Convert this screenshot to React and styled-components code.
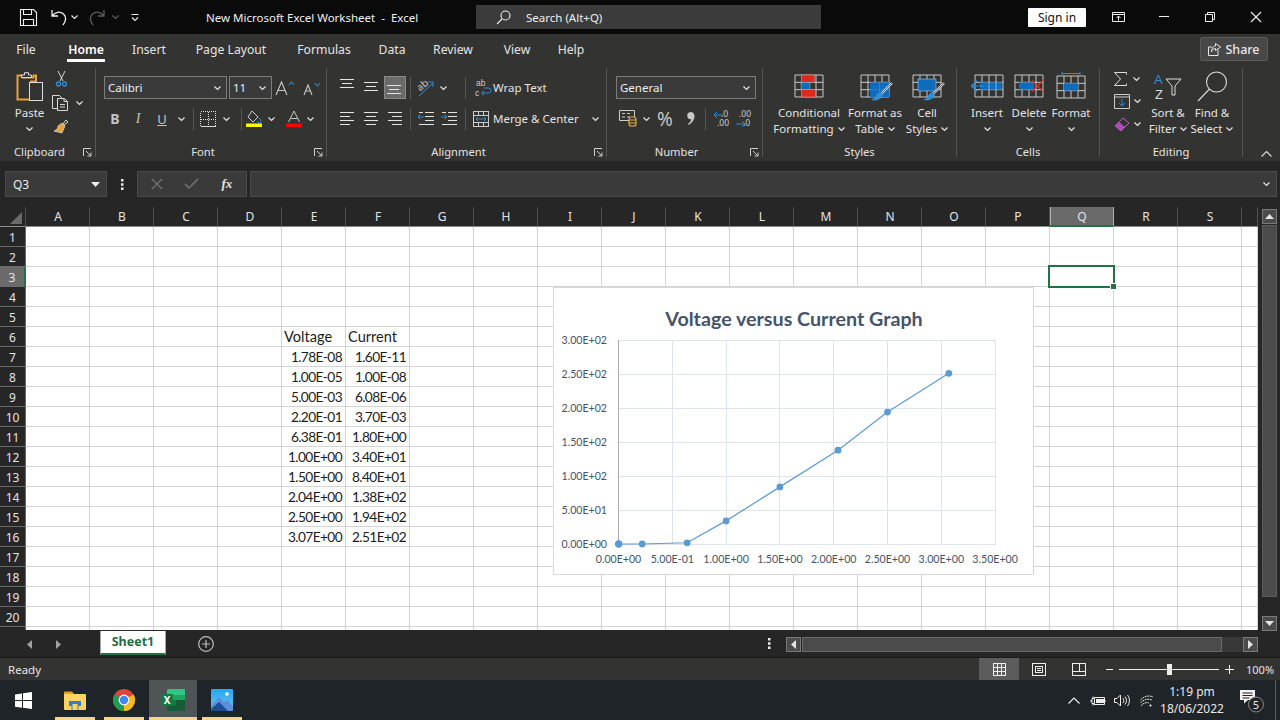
import React from "react";
import styled, { createGlobalStyle } from "styled-components";

const GlobalStyle = createGlobalStyle`
  html, body { margin: 0; padding: 0; background: #262626; }
  body { font-family: "Noto Sans", "Open Sans", sans-serif; font-size: 12px; color: #e8e8e8; }
  * { box-sizing: border-box; }
`;

const CALIBRI = `Lato, "Open Sans", sans-serif`;
const INK = "#e4e4e4";
const BLUE = "#2f8fd6";
const FILL = "#0f6cbd";
const GRID = "#c8c8c8";

const Page = styled.div`
  width: 1280px;
  height: 720px;
  display: flex;
  flex-direction: column;
  overflow: hidden;
`;

/* ---------- title bar ---------- */
const TitleBar = styled.div`
  height: 34px;
  flex: none;
  background: #0a0a0a;
  display: flex;
  align-items: center;
`;
const QuickBar = styled.div`
  width: 206px;
  display: flex;
  align-items: center;
  padding-left: 20px;
`;
const Title = styled.div`
  width: 270px;
  white-space: pre;
  font-size: 11.5px;
  color: #f0f0f0;
`;
const Search = styled.div`
  width: 345px;
  height: 24px;
  background: #3b3b3b;
  display: flex;
  align-items: center;
  gap: 15px;
  padding-left: 20px;
  font-size: 11.5px;
  color: #eee;
`;
const SignIn = styled.div`
  width: 58px;
  height: 19px;
  margin-left: 207px;
  background: #fff;
  color: #111;
  border-radius: 1px;
  text-align: center;
  line-height: 19px;
  font-size: 12px;
`;
const WinButton = styled.div`
  width: 46px;
  display: flex;
  justify-content: center;
  margin-left: ${p => p.$ml || 0}px;
`;

/* ---------- menu ---------- */
const MenuBar = styled.div`
  height: 30px;
  flex: none;
  background: #333332;
  display: flex;
`;
const MenuTab = styled.div`
  width: ${p => p.$w}px;
  display: flex;
  justify-content: center;
  padding-top: 7px;
  font-size: 12.2px;
  color: ${INK};
`;
const MenuLabel = styled.span`
  line-height: 17px;
  height: 21px;
  padding: 0 1px 1px;
  font-weight: ${p => (p.$on ? 600 : 400)};
  color: ${p => (p.$on ? "#fff" : INK)};
  border-bottom: 3px solid ${p => (p.$on ? "#fff" : "transparent")};
`;
const ShareButton = styled.div`
  margin: 3px 12px 0 auto;
  width: 68px;
  height: 24px;
  border: 1px solid #5a5a5a;
  border-radius: 2px;
  background: #484848;
  display: flex;
  align-items: center;
  justify-content: center;
  gap: 4px;
  font-size: 12.5px;
  font-weight: 500;
`;

/* ---------- ribbon ---------- */
const Ribbon = styled.div`
  height: 97px;
  flex: none;
  background: #333332;
  padding-top: 4px;
  display: flex;
  position: relative;
`;
const Group = styled.div`
  width: ${p => p.$w}px;
  height: 89px;
  flex: none;
  display: flex;
  flex-direction: column;
  border-right: 1px solid #555;
`;
const GroupBody = styled.div`
  flex: 1;
  display: flex;
  flex-direction: ${p => (p.$stack ? "column" : "row")};
  gap: ${p => (p.$stack ? 8 : 0)}px;
  padding-top: ${p => (p.$stack ? 8 : 4)}px;
  padding-left: ${p => p.$pl || 0}px;
`;
const GroupFoot = styled.div`
  height: 10px;
  line-height: 10px;
  display: grid;
  grid-template-columns: 1fr ${p => (p.$launcher ? "16px" : "")};
  text-align: center;
  font-size: 11.2px;
  color: ${INK};
  align-items: center;
`;
const LauncherSlot = styled.div`
  justify-self: end;
  margin-right: 3px;
`;
const ToolRow = styled.div`
  height: 23px;
  display: flex;
  align-items: center;
`;
const Tool = styled.div`
  width: ${p => p.$w || 22}px;
  height: ${p => p.$h || 23}px;
  flex: none;
  display: flex;
  align-items: center;
  justify-content: ${p => (p.$start ? "flex-start" : "center")};
  gap: ${p => p.$gap || 0}px;
  margin-left: ${p => p.$ml || 0}px;
  background: ${p => (p.$on ? "#6b6b6b" : "transparent")};
  border: ${p => (p.$on ? "1px solid #8a8a8a" : "none")};
  font-size: 11.5px;
  white-space: nowrap;
  color: ${INK};
`;
const ToolSep = styled.div`
  width: 1px;
  height: 22px;
  flex: none;
  background: #555;
  margin-left: ${p => p.$ml || 0}px;
`;
const Combo = styled.div`
  width: ${p => p.$w}px;
  height: 23px;
  flex: none;
  margin-left: ${p => p.$ml || 0}px;
  border: 1px solid #7c7c7c;
  background: #3a3a3a;
  display: flex;
  align-items: center;
  justify-content: space-between;
  padding: 0 5px 0 3px;
  font-size: 11.5px;
  color: #eee;
`;
const Letter = styled.span`
  font-family: ${p => p.$serif ? `"Liberation Serif", serif` : `"Noto Sans", sans-serif`};
  font-weight: ${p => (p.$bold ? 700 : 400)};
  font-style: ${p => (p.$italic ? "italic" : "normal")};
  text-decoration: ${p => (p.$under ? "underline" : "none")};
  font-size: ${p => p.$size || 13}px;
  color: ${p => p.$color || "#c4c4c4"};
`;
const PasteColumn = styled.div`
  width: 43px;
  margin-left: 8px;
  display: flex;
  flex-direction: column;
  align-items: center;
`;
const PasteLabel = styled.div`
  height: 16px;
  line-height: 16px;
  margin-top: 3px;
  font-size: 11.5px;
  color: ${INK};
`;
const SmallColumn = styled.div`
  width: ${p => p.$w}px;
  flex: none;
  display: flex;
  flex-direction: column;
  gap: ${p => p.$gap || 0}px;
  margin-top: ${p => p.$mt || 0}px;
`;
const BigButton = styled.div`
  width: ${p => p.$w}px;
  flex: none;
  display: flex;
  flex-direction: column;
  align-items: center;
  font-size: 11.5px;
  line-height: 16px;
  color: ${INK};
  white-space: nowrap;
`;
const IconBox = styled.div`
  height: 30px;
  margin-bottom: 3px;
`;
const TextLine = styled.div`
  height: 16px;
  display: flex;
  align-items: center;
  gap: 4px;
`;
const Collapse = styled.div`
  position: absolute;
  right: 8px;
  bottom: 4px;
`;
const MergeChev = styled.span`
  margin-left: 9px;
`;

/* ---------- formula bar ---------- */
const FormulaBar = styled.div`
  height: 46px;
  flex: none;
  background: #262626;
  padding: 10px 3px 10px 5px;
  display: flex;
`;
const FieldBox = styled.div`
  height: 26px;
  background: #3a3a3a;
  border: 1px solid #4a4a4a;
  display: flex;
  align-items: center;
`;
const NameBox = styled(FieldBox)`
  width: 102px;
  justify-content: space-between;
  padding: 0 6px 0 7px;
  font-size: 12px;
  color: #eee;
`;
const Dots = styled.div`
  width: 30px;
  display: flex;
  justify-content: center;
  align-items: center;
`;
const FxGroup = styled(FieldBox)`
  width: 110px;
  justify-content: space-around;
  padding: 0 2px;
`;
const FormulaInput = styled(FieldBox)`
  flex: 1;
  margin-left: 3px;
  justify-content: flex-end;
  padding-right: 6px;
`;

/* ---------- sheet ---------- */
const SheetArea = styled.div`
  height: 424px;
  flex: none;
  display: flex;
  background: #262626;
`;
const GridWrap = styled.div`
  width: 1258px;
  height: 423px;
  overflow: hidden;
  position: relative;
  flex: none;
`;
const Row = styled.div`
  height: 20px;
  display: flex;
`;
const Corner = styled.div`
  width: 26px;
  flex: none;
  background: #262626;
  border-bottom: 1px solid #8a8a8a;
  border-right: 1px solid #4e4e4e;
  display: flex;
  align-items: flex-end;
  justify-content: flex-end;
  padding: 0 3px 2px 0;
`;
const ColHead = styled.div`
  width: ${p => p.$w || 64}px;
  flex: none;
  background: ${p => (p.$on ? "#6a6a6a" : "#262626")};
  border-bottom: ${p => (p.$on ? "2px solid #217346" : "1px solid #8a8a8a")};
  border-right: 1px solid ${p => (p.$on ? "#b0b0b0" : "#505050")};
  box-shadow: ${p => (p.$on ? "inset 1px 0 0 #b0b0b0" : "none")};
  text-align: center;
  line-height: 20px;
  padding-left: 1px;
  font-size: 12px;
  color: #e4e4e4;
`;
const RowHead = styled.div`
  width: 26px;
  flex: none;
  background: ${p => (p.$on ? "#6a6a6a" : "#262626")};
  border-bottom: 1px solid #6a6a6a;
  border-right: ${p => (p.$on ? "2px solid #217346" : "1px solid #6a6a6a")};
  text-align: center;
  line-height: 21px;
  font-size: 12px;
  color: #e4e4e4;
`;
const Cell = styled.div`
  width: ${p => p.$w || 64}px;
  flex: none;
  background: #fff;
  border-right: 1px solid #d4d4d4;
  border-bottom: 1px solid #d4d4d4;
  font-family: ${CALIBRI};
  font-size: ${p => (p.$num ? 13.7 : 14.6)}px;
  letter-spacing: ${p => (p.$num ? -0.6 : 0)}px;
  line-height: 20px;
  color: #1c1c1c;
  text-align: ${p => (p.$num ? "right" : "left")};
  padding: ${p => (p.$num ? "0 3px 0 0" : "0 0 0 2px")};
  white-space: nowrap;
`;
const Selection = styled.div`
  position: absolute;
  left: 1048px;
  top: 58px;
  width: 67px;
  height: 23px;
  border: 2px solid #217346;
  &::after {
    content: "";
    position: absolute;
    right: -3px;
    bottom: -3px;
    width: 5px;
    height: 5px;
    background: #217346;
    outline: 1px solid #fff;
  }
`;
const ChartFrame = styled.div`
  position: absolute;
  left: 553px;
  top: 80px;
  width: 481px;
  height: 288px;
  background: #fff;
  border: 1px solid #d9d9d9;
`;
const VScroll = styled.div`
  flex: 1;
  display: flex;
  flex-direction: column;
  padding: 2px 3px 0 4px;
`;
const ScrollButton = styled.div`
  width: ${p => p.$w || 15}px;
  height: 15px;
  flex: none;
  background: #4b4b4b;
  border: 1px solid #7a7a7a;
  display: flex;
  align-items: center;
  justify-content: center;
`;
const VThumb = styled.div`
  height: 372px;
  margin-top: 1px;
  flex: none;
  background: #4b4b4b;
  border: 1px solid #5c5c5c;
`;
const VTrack = styled.div`
  flex: 1;
`;

/* ---------- tabs ---------- */
const TabBar = styled.div`
  height: 27px;
  flex: none;
  background: #262626;
  display: flex;
  align-items: flex-start;
  border-bottom: 1px solid #1a1a1a;
`;
const TabNav = styled.div`
  width: 100px;
  height: 26px;
  display: flex;
  align-items: center;
  gap: 24px;
  padding-left: 27px;
`;
const SheetTab = styled.div`
  width: 66px;
  height: 24px;
  background: #fff;
  border: 1px solid #a8a8a8;
  border-top: none;
  border-bottom: 2px solid #217346;
  text-align: center;
  line-height: 22px;
  font-size: 12.5px;
  font-weight: 700;
  color: #1f6e46;
`;
const AddSheet = styled.div`
  width: 16px;
  height: 16px;
  margin: 5px 0 0 32px;
`;
const TabDots = styled.div`
  margin: 7px 0 0 547px;
  width: 16px;
  display: flex;
  justify-content: center;
`;
const HScroll = styled.div`
  display: flex;
  margin: 6px 0 0 9px;
  width: 472px;
`;
const HThumb = styled.div`
  width: 420px;
  height: 15px;
  flex: none;
  margin-left: 1px;
  background: #4b4b4b;
  border: 1px solid #6a6a6a;
`;
const HTrack = styled.div`
  flex: 1;
  background: #383838;
  height: 15px;
`;

/* ---------- status bar ---------- */
const StatusBar = styled.div`
  height: 22px;
  flex: none;
  background: #333332;
  display: flex;
  align-items: center;
  padding-left: 8px;
  font-size: 11.5px;
  color: #e4e4e4;
`;
const ViewBtn = styled.div`
  width: 40px;
  height: 22px;
  flex: none;
  display: flex;
  align-items: center;
  justify-content: center;
  background: ${p => (p.$on ? "#5c5c5c" : "transparent")};
  margin-left: ${p => p.$ml || 0}px;
`;
const ZoomBar = styled.div`
  display: flex;
  align-items: center;
  margin-left: 7px;
  gap: 3px;
`;
const Slider = styled.div`
  width: 100px;
  height: 1px;
  margin: 0 3px;
  background: #eee;
  display: flex;
  justify-content: center;
  align-items: center;
`;
const SliderKnob = styled.div`
  width: 5px;
  height: 11px;
  flex: none;
  background: #eee;
`;
const ZoomText = styled.div`
  margin-left: 12px;
  font-size: 11px;
`;

/* ---------- taskbar ---------- */
const Taskbar = styled.div`
  height: 40px;
  flex: none;
  background: #1e2427;
  display: flex;
  align-items: stretch;
`;
const StartBtn = styled.div`
  width: 51px;
  padding-right: 4px;
  display: flex;
  align-items: center;
  justify-content: center;
`;
const TaskItem = styled.div`
  width: 48px;
  margin-right: 1px;
  display: flex;
  align-items: center;
  justify-content: center;
  background-color: ${p => (p.$on ? "#4f5557" : "transparent")};
  background-image: linear-gradient(#f6d586, #f6d586);
  background-repeat: no-repeat;
  background-position: center bottom;
  background-size: ${p => (p.$on ? "100%" : "40px")} 3px;
`;
const Tray = styled.div`
  margin-left: auto;
  display: flex;
  align-items: center;
`;
const TrayIcon = styled.div`
  width: ${p => p.$w || 24}px;
  display: flex;
  justify-content: center;
`;
const Clock = styled.div`
  width: 66px;
  margin-left: 1px;
  text-align: center;
  font-size: 12px;
  line-height: 17px;
  color: #e8e8e8;
`;
const Notify = styled.div`
  width: 50px;
  padding-left: 6px;
  height: 40px;
  display: flex;
  align-items: center;
  justify-content: center;
`;
const ShowDesktop = styled.div`
  width: 5px;
  height: 40px;
  border-left: 1px solid #5a5f62;
`;

/* ---------- icons ---------- */
const Icon = ({ w, h, vb, children, color = INK, sw = 1, flip, ...rest }) => (
  <svg
    width={w}
    height={h}
    viewBox={vb || `0 0 ${w} ${h}`}
    fill="none"
    stroke={color}
    strokeWidth={sw}
    style={{ display: "block", flex: "none", overflow: "visible", transform: flip ? "scaleX(-1)" : "none" }}
    {...rest}
  >
    {children}
  </svg>
);

const Chev = ({ color = INK }) => (
  <Icon w={7} h={4} color={color} sw={1.2}>
    <path d="M.5.5 3.5 3.5 6.5.5" />
  </Icon>
);

const Lines = ({ rows, w = 22, h = 23 }) => (
  <Icon w={w} h={h} shapeRendering="crispEdges">
    {rows.map(([a, b, y], i) => (
      <path key={i} d={`M${a} ${y + 0.5}H${b}`} />
    ))}
  </Icon>
);

const Launcher = () => (
  <LauncherSlot>
    <Icon w={9} h={9} color="#cfcfcf">
      <path d="M.5 8V.5H8M3 3l5 5M8 4.5V8H4.5" />
    </Icon>
  </LauncherSlot>
);

const TableGrid = ({ x = 4, y = 3, cw = 7, rh = 7.33, cols = 4, rows = 3, color = GRID }) => {
  const w = cw * cols;
  const h = rh * rows;
  const d = [];
  for (let i = 0; i <= cols; i++) d.push(`M${x + i * cw} ${y}v${h}`);
  for (let i = 0; i <= rows; i++) d.push(`M${x} ${y + i * rh}h${w}`);
  return <path d={d.join("")} stroke={color} />;
};

const Brush = () => (
  <g>
    <path d="M35 11 L24 22" stroke="#d8d8d8" strokeWidth="2.4" />
    <path d="M35 11 L24 22" stroke="#333" strokeWidth=".7" />
    <path d="M24 20c-3 0-4 2-5 4-1 2-3 3-5 4 4 1 9 0 11-3 1-2 1-3 1-3z" fill={BLUE} stroke="none" />
  </g>
);

const SaveIcon = () => (
  <Icon w={17} h={17} color="#f0f0f0" sw={1.1}>
    <path d="M.5.5h13l3 3v13H.5zM3.5.5v5h8v-5M3.5 16.5v-6h10v6" />
  </Icon>
);
const UndoIcon = ({ color, flip }) => (
  <Icon w={16} h={17} color={color} sw={1.3} flip={flip}>
    <path d="M1 1v6h6M1.5 6.5C4 3 9 2 12.5 5c3 3 2.5 7-.5 11" />
  </Icon>
);
const CustomizeIcon = () => (
  <Icon w={8} h={7} color="#eee" sw={1.1}>
    <path d="M.5.5h7M1 3.5l3 3 3-3" />
  </Icon>
);
const SearchIcon = () => (
  <Icon w={15} h={15} color="#eee" sw={1.1}>
    <circle cx="9.5" cy="5.5" r="4.5" />
    <path d="M6 9l-5 5" />
  </Icon>
);
const DisplayIcon = () => (
  <Icon w={13} h={10} color="#f0f0f0">
    <path d="M.5.5h12v9H.5zM.5 2.5h12M6.5 8.5V4M4.5 6l2-2 2 2" />
  </Icon>
);
const MinIcon = () => (
  <Icon w={10} h={10} color="#f0f0f0">
    <path d="M0 4.5h10" />
  </Icon>
);
const RestoreIcon = () => (
  <Icon w={10} h={10} color="#f0f0f0">
    <path d="M.5 2.5h7v7h-7zM2.5 2.5V.5h7v7h-2" />
  </Icon>
);
const CloseIcon = () => (
  <Icon w={10} h={10} color="#f0f0f0" sw={1.1}>
    <path d="M0 0l10 10M10 0 0 10" />
  </Icon>
);
const ShareIcon = () => (
  <Icon w={13} h={13} color="#e8e8e8">
    <path d="M10 6.5v6H.5V4H4" />
    <path d="M7.5.5 12.5 4 7.5 7.5V5.5C5.5 5.5 4 7 3.5 9 3.5 5.5 5 3 7.5 3z" />
  </Icon>
);
const PasteIcon = () => (
  <Icon w={28} h={30}>
    <path d="M1.5 3.5h5v2h11v-2h2.5v6H15v18H1.5z" stroke="#e8a33c" strokeWidth="2" />
    <path d="M5.5 5.5V3h3V.7h4V3h3v2.5z" stroke="#ddd" fill="#333" />
    <rect x="13.5" y="10.5" width="13" height="18" fill="#333" stroke="#ddd" />
  </Icon>
);
const ScissorsIcon = () => (
  <Icon w={11} h={16} color="#d8d8d8">
    <path d="M2 0l5 10M9 0 4 10" />
    <circle cx="2.5" cy="13" r="2" stroke={BLUE} strokeWidth="1.3" />
    <circle cx="8.5" cy="13" r="2" stroke={BLUE} strokeWidth="1.3" />
  </Icon>
);
const CopyIcon = () => (
  <Icon w={17} h={16} color="#d8d8d8">
    <path d="M5 13.5H.5V.5h7l3 3" />
    <path d="M5.5 3.5h7l3 3v9h-10zM12 3.5v3h3.5M8 9.5h5M8 12h5" />
  </Icon>
);
const PainterIcon = () => (
  <Icon w={16} h={16}>
    <path d="M10 5l3-4 2 2-4 3" stroke="#d8d8d8" />
    <path d="M9 4l3 3-3 7-8-2c3-1 4-3 4-5z" fill="#e8a33c" stroke="#d8d8d8" strokeWidth=".7" />
  </Icon>
);
const GrowIcon = ({ up }) => (
  <Icon w={20} h={16} color="#c8c8c8" sw={1.1}>
    <path d={up ? "M1 15 6.5 2 12 15M3 10.5h7" : "M3 15l4-10 4 10M4.5 11h5"} />
    <path d={up ? "M14 5l2.5-3L19 5" : "M14 3l2.5 3L19 3"} stroke={BLUE} />
  </Icon>
);
const BorderIcon = () => (
  <Icon w={16} h={16} color="#ddd" strokeDasharray="1 1" shapeRendering="crispEdges">
    <path d="M.5.5h15v15H.5zM8 .5v15M.5 8h15" />
    <path d="M.5 15.5h15" strokeDasharray="none" />
  </Icon>
);
const FillIcon = () => (
  <Icon w={17} h={17}>
    <path d="M6 1l6 6-5 5-5-5z" stroke="#ccc" />
    <path d="M13 8c1.4 1.6 2 2.6 2 3.4a1.7 1.7 0 0 1-3.4 0" stroke={BLUE} />
    <rect x="0" y="13.5" width="16" height="3.5" fill="#ffff00" stroke="none" />
  </Icon>
);
const FontColorIcon = () => (
  <Icon w={16} h={17}>
    <path d="M2.5 12 8 1l5.5 11M4.5 8.5h7" stroke="#c8c8c8" />
    <rect x="0" y="13.5" width="16" height="3.5" fill="#ff0000" stroke="none" />
  </Icon>
);
const OrientIcon = () => (
  <Icon w={18} h={20}>
    <text x="0" y="11" fontSize="10" fill="#c8c8c8" stroke="none" fontFamily="Noto Sans" transform="rotate(-40 5 8)">ab</text>
    <path d="M2 18 16 5M11 4h5v5" stroke={BLUE} />
  </Icon>
);
const IndentIcon = ({ out }) => (
  <Icon w={22} h={23}>
    <path d="M10 5.5h9M10 9.5h9M10 13.5h9M4 17.5h15M4 5.5h4" stroke={INK} />
    <path d={out ? "M9 10H3M5.5 7.5 3 10l2.5 2.5" : "M3 10h6M6.5 7.5 9 10l-2.5 2.5"} stroke={BLUE} />
  </Icon>
);
const WrapIcon = () => (
  <Icon w={17} h={18}>
    <text x="1" y="7" fontSize="8.5" fill="#ccc" stroke="none" fontFamily="Liberation Sans">ab</text>
    <text x="0" y="17" fontSize="8.5" fill="#ccc" stroke="none" fontFamily="Liberation Sans">c</text>
    <path d="M7 14h6.5a2.5 2.5 0 0 0 0-5H9M9 11.8 6.5 14l2.5 2.4" stroke={BLUE} />
  </Icon>
);
const MergeIcon = () => (
  <Icon w={16} h={16} shapeRendering="crispEdges">
    <path d="M.5.5h15v15H.5zM.5 4.5h15M.5 11.5h15M5.5.5v4M10.5.5v4M5.5 11.5v4M10.5 11.5v4" stroke="#ccc" />
    <path d="M3 8h10M5 6 3 8l2 2M11 6l2 2-2 2" stroke={BLUE} shapeRendering="auto" />
  </Icon>
);
const AccountingIcon = () => (
  <Icon w={18} h={17}>
    <path d="M.5.5h15v10H.5z" stroke="#ccc" />
    <path d="M3 3.5H6M3 7H6M8 3.5h3M8 7h3" stroke="#ccc" />
    <rect x="10" y="7" width="7" height="9" rx="2" fill="#333" stroke="#e8b23c" strokeWidth="1.1" />
    <path d="M10 10h7M10 13h7" stroke="#e8b23c" />
  </Icon>
);
const CommaIcon = () => (
  <Icon w={9} h={13} color="none">
    <path d="M4.5 0a4 4 0 0 1 4 4.2c0 3.6-2.4 6.9-6 8.6l-.7-1c1.9-1.2 3.2-2.8 3.5-4.6A3.6 3.6 0 1 1 4.5 0z" fill="#c8c8c8" />
  </Icon>
);
const DecimalIcon = ({ less }) => (
  <Icon w={20} h={18}>
    <text x={less ? 8 : 4} y="7" fontSize="8.5" fill="#ccc" stroke="none" fontFamily="Noto Sans">{less ? ".0" : ".00"}</text>
    <text x={less ? 4 : 8} y="16" fontSize="8.5" fill="#ccc" stroke="none" fontFamily="Noto Sans">{less ? ".00" : ".0"}</text>
    <path d={less ? "M1 5h9M4 2 1 5l3 3" : "M1 14h9M7 11l3 3-3 3"} stroke={BLUE} />
  </Icon>
);
const ConditionalIcon = () => (
  <Icon w={36} h={30}>
    <TableGrid />
    <rect x="10.5" y="3" width="13" height="7.3" fill="#e0281c" stroke="#f08a84" strokeWidth=".5" />
    <rect x="10" y="10.3" width="9" height="7.3" fill={FILL} stroke="#9fc7e8" strokeWidth=".5" />
    <rect x="10.5" y="17.6" width="14" height="7.4" fill="#e0281c" stroke="#f08a84" strokeWidth=".5" />
  </Icon>
);
const FormatTableIcon = () => (
  <Icon w={36} h={30}>
    <TableGrid />
    <rect x="13" y="10.3" width="19" height="14.7" fill={FILL} stroke="none" />
    <path d="M13 17.6h19M22.5 10.3v14.7" stroke="#4d94d0" strokeWidth=".5" />
    <Brush />
  </Icon>
);
const CellStylesIcon = () => (
  <Icon w={36} h={30}>
    <TableGrid />
    <rect x="9" y="7" width="18" height="12" fill={FILL} stroke="#9fc7e8" strokeWidth=".6" />
    <Brush />
  </Icon>
);
const InsertCellIcon = () => (
  <Icon w={36} h={30}>
    <TableGrid x={6} />
    <rect x="11" y="10.3" width="22" height="7.3" fill={FILL} stroke="none" />
    <path d="M15 14H2.5M8 8.5 2.5 14 8 19.5" stroke={BLUE} strokeWidth="1.2" />
    <path d="M20 10v7.6M27 10v7.6" stroke="#cfe2f3" strokeWidth=".6" />
  </Icon>
);
const DeleteCellIcon = () => (
  <Icon w={36} h={30}>
    <TableGrid />
    <rect x="8" y="10.3" width="15" height="7.3" fill={FILL} stroke="none" />
    <path d="M21 8.5l11 11M32 8.5l-11 11" stroke="#e0352b" strokeWidth="1.2" />
  </Icon>
);
const FormatCellIcon = () => (
  <Icon w={36} h={30}>
    <path d="M9 0v3M9 1.5h18M27 0v3" stroke={BLUE} />
    <TableGrid y={4} />
    <rect x="11" y="11.3" width="14" height="7.3" fill={FILL} stroke="none" />
  </Icon>
);
const SumIcon = () => (
  <Icon w={13} h={14} color="#ddd">
    <path d="M12.5 2.5V.5H.5l6 6.5-6 6.5h12v-2" />
  </Icon>
);
const FillDownIcon = () => (
  <Icon w={16} h={15}>
    <path d="M.5.5h15v14H.5zM.5 3h15" stroke="#ccc" />
    <path d="M8 5v7M5 9l3 3 3-3" stroke={BLUE} />
  </Icon>
);
const EraserIcon = () => (
  <Icon w={16} h={15}>
    <path d="M1 9l8-8 6 5-8 8z" stroke="#c060c8" />
    <path d="M1 9l4-4 6 5-4 4z" fill="#b04ab8" stroke="none" />
  </Icon>
);
const SortIcon = () => (
  <Icon w={36} h={30}>
    <text x="4" y="12" fontSize="13" fill={BLUE} stroke="none" fontFamily="Liberation Sans">A</text>
    <text x="5" y="27" fontSize="13" fill="#ddd" stroke="none" fontFamily="Liberation Sans">Z</text>
    <path d="M16 7h15l-6 7v9h-3v-9z" stroke="#ddd" />
  </Icon>
);
const FindIcon = () => (
  <Icon w={36} h={30} color="#ddd" sw={1.1}>
    <circle cx="22.5" cy="10" r="10" />
    <path d="M15.5 17 4 29" />
  </Icon>
);
const CaretDown = ({ color = "#eee" }) => (
  <Icon w={9} h={5} color="none">
    <path d="M0 0h9L4.5 5z" fill={color} />
  </Icon>
);
const VDots = () => (
  <Icon w={3} h={11} color="none">
    <path d="M0 0h2.5v2.5H0zM0 4.2h2.5v2.5H0zM0 8.4h2.5v2.5H0z" fill="#eee" />
  </Icon>
);
const MiniArrow = ({ dir, color = "#e4e4e4" }) => {
  const d = { up: "M0 5 4.5 0 9 5z", down: "M0 0h9L4.5 5z", left: "M5 0v9L0 4.5z", right: "M0 0v9l5-4.5z" }[dir];
  const vert = dir === "up" || dir === "down";
  return (
    <Icon w={vert ? 9 : 5} h={vert ? 5 : 9} color="none">
      <path d={d} fill={color} />
    </Icon>
  );
};
const PlusCircle = () => (
  <Icon w={16} h={16} color="#bdbdbd" sw={1.2}>
    <circle cx="8" cy="8" r="7.3" />
    <path d="M4 8h8M8 4v8" />
  </Icon>
);
const NormalViewIcon = () => (
  <Icon w={13} h={13} color="#eee" shapeRendering="crispEdges">
    <path d="M.5.5h12v12H.5zM4.5.5v12M8.5.5v12M.5 4.5h12M.5 8.5h12" />
  </Icon>
);
const LayoutViewIcon = () => (
  <Icon w={14} h={13} color="#eee" shapeRendering="crispEdges">
    <path d="M.5.5h13v12H.5zM3.5 3.5h7v6h-7zM5 5.5h4M5 7.5h4" />
  </Icon>
);
const BreakViewIcon = () => (
  <Icon w={14} h={13} color="#eee" shapeRendering="crispEdges">
    <path d="M.5.5h13v12H.5zM7.5.5v8M.5 8.5h13" />
  </Icon>
);
const WinLogo = () => (
  <Icon w={17} h={17} color="none">
    <path d="M0 2.4 7 1.4v6.7H0zM8 1.2 17 0v8.1H8zM0 9h7v6.7L0 14.7zM8 9h9v8l-9-1.3z" fill="#fff" />
  </Icon>
);
const FolderIcon = () => (
  <Icon w={22} h={19} color="none">
    <path d="M0 1.5A1 1 0 0 1 1 .5h7l2 2.5H0z" fill="#e2a21e" />
    <path d="M0 3h21a1 1 0 0 1 1 1v14a1 1 0 0 1-1 1H1a1 1 0 0 1-1-1z" fill="#fcd463" />
    <path d="M5 10h12v5h-2.5v4h-7v-4H5z" fill="#2f82c8" />
    <path d="M8.5 13h5v6h-5z" fill="#fcd463" />
  </Icon>
);
const ChromeIcon = () => (
  <Icon w={24} h={24} color="none">
    <circle cx="12" cy="12" r="11" fill="#db4437" />
    <path d="M12 12 21.53 6.5A11 11 0 0 1 12 23z" fill="#f5bd1c" />
    <path d="M12 12V23A11 11 0 0 1 2.47 6.5z" fill="#1e9e50" />
    <circle cx="12" cy="12" r="5.4" fill="#fff" />
    <circle cx="12" cy="12" r="4.2" fill="#4285f4" />
  </Icon>
);
const ExcelIcon = () => (
  <Icon w={24} h={22} color="none">
    <path d="M6 1a1 1 0 0 1 1-1h16a1 1 0 0 1 1 1v5H6z" fill="#33c481" />
    <path d="M6 6h9v5H6z" fill="#21a366" />
    <path d="M15 6h9v5h-9z" fill="#21a366" />
    <path d="M6 11h9v5H6z" fill="#107c41" />
    <path d="M15 11h9v5h-9z" fill="#185c37" />
    <path d="M6 16h18v5a1 1 0 0 1-1 1H7a1 1 0 0 1-1-1z" fill="#185c37" />
    <rect x="0" y="5" width="12" height="12" rx="1" fill="#107c41" />
    <text x="6" y="14.5" fontSize="10" fontWeight="700" fill="#fff" textAnchor="middle" fontFamily="Noto Sans">X</text>
  </Icon>
);
const PhotosIcon = () => (
  <Icon w={22} h={22} color="none">
    <defs>
      <linearGradient id="sky" x1="0" y1="0" x2="0" y2="1">
        <stop offset="0" stopColor="#27a7ee" />
        <stop offset="1" stopColor="#6fc3f2" />
      </linearGradient>
    </defs>
    <rect width="22" height="22" rx="1" fill="url(#sky)" />
    <circle cx="16" cy="5" r="1.8" fill="#fff" />
    <path d="M0 17 8 8l5 5 3-2 6 6v4a1 1 0 0 1-1 1H1a1 1 0 0 1-1-1z" fill="#5a8fdc" />
    <path d="M0 20 8 13l9 9H1a1 1 0 0 1-1-1z" fill="#1b4f94" />
  </Icon>
);
const TrayChevron = () => (
  <Icon w={12} h={7} color="#eee" sw={1.2}>
    <path d="M.5 6.5 6 1l5.5 5.5" />
  </Icon>
);
const BatteryIcon = () => (
  <Icon w={16} h={11} color="#eee">
    <path d="M4 2.5h10.5v7H4M15 5v2" />
    <rect x="6" y="4" width="8" height="4" fill="#eee" stroke="none" />
    <path d="M0 6h2M2 3.5h2.5v5H2zM3 1.5v2M3 8.5v2" />
  </Icon>
);
const VolumeIcon = () => (
  <Icon w={16} h={13} color="#eee">
    <path d="M.5 4.5h2.5L6.5 1v11L3 8.5H.5zM9 4c1 1.5 1 3.5 0 5M11 2.5c2 2.5 2 5.5 0 8M13.5 1c2.5 3 2.5 8 0 11" />
  </Icon>
);
const WifiIcon = () => (
  <Icon w={13} h={13} color="#ddd">
    <path d="M.5 6C4 2 9 1 13 3M.5 9C3 6 7 4 12 6M1 12c2-3 5-4 8-3" strokeDasharray="2 .6" />
    <circle cx="10.5" cy="11.5" r="1.1" fill="#eee" stroke="none" />
  </Icon>
);
const NotifyIcon = () => (
  <Icon w={26} h={20}>
    <path d="M0 0h15v10H8L4 13.5V10H0z" fill="#f2f2f2" stroke="none" />
    <path d="M2.5 3h10M2.5 5.5h10M2.5 8h7" stroke="#222" />
    <circle cx="16" cy="14.5" r="7.5" fill="#1e2427" stroke="#8a8a8a" />
    <text x="16" y="18.5" fontSize="11" fill="#eee" stroke="none" textAnchor="middle" fontFamily="Noto Sans">5</text>
  </Icon>
);

/* ---------- chart ---------- */
const CHART = { x0: 64.5, y0: 256, ux: 107.6, uy: 0.68, top: 52, right: 441.5 };
const POINTS = [
  [0, 0], [0.00001, 0], [0.005, 0], [0.22, 0.0037], [0.638, 1.8], [1, 34],
  [1.5, 84], [2.04, 138], [2.5, 194], [3.07, 251],
];
const px = x => CHART.x0 + x * CHART.ux;
const py = y => CHART.y0 - y * CHART.uy;

const Chart = () => {
  const axisText = { fontFamily: CALIBRI, fontSize: 10.6, fill: "#44546a" };
  return (
    <svg width="479" height="286" style={{ display: "block" }}>
      <text
        x="240"
        y="38"
        textAnchor="middle"
        style={{ fontFamily: CALIBRI, fontSize: 19.7, fontWeight: 700, fill: "#44546a" }}
      >
        Voltage versus Current Graph
      </text>
      <g stroke="#dfe3ea" strokeWidth="1" shapeRendering="crispEdges">
        {[50, 100, 150, 200, 250, 300].map(v => (
          <path key={v} d={`M${CHART.x0} ${py(v)}H${CHART.right}`} />
        ))}
        {[0.5, 1, 1.5, 2, 2.5, 3, 3.5].map(v => (
          <path key={v} d={`M${px(v)} ${CHART.top}V${CHART.y0}`} />
        ))}
        <path d={`M${CHART.x0} ${CHART.y0}H${CHART.right}`} />
      </g>
      <path d={`M${CHART.x0} ${CHART.top}V${CHART.y0}`} stroke="#a9adb3" shapeRendering="crispEdges" />
      {["0.00E+00", "5.00E+01", "1.00E+02", "1.50E+02", "2.00E+02", "2.50E+02", "3.00E+02"].map((t, i) => (
        <text key={t} x="53" y={py(i * 50) + 4} textAnchor="end" style={axisText}>{t}</text>
      ))}
      {["0.00E+00", "5.00E-01", "1.00E+00", "1.50E+00", "2.00E+00", "2.50E+00", "3.00E+00", "3.50E+00"].map((t, i) => (
        <text key={t} x={px(i * 0.5)} y="275" textAnchor="middle" style={axisText}>{t}</text>
      ))}
      <polyline
        points={POINTS.map(([x, y]) => `${px(x)},${py(y)}`).join(" ")}
        fill="none"
        stroke="#5b9bd5"
        strokeWidth="1.2"
      />
      {POINTS.map(([x, y], i) => (
        <circle key={i} cx={px(x)} cy={py(y)} r="3.4" fill="#5b9bd5" />
      ))}
    </svg>
  );
};

/* ---------- data ---------- */
const MENU = [
  ["File", 52], ["Home", 68], ["Insert", 58], ["Page Layout", 106], ["Formulas", 80],
  ["Data", 56], ["Review", 66], ["View", 62], ["Help", 46],
];
const COLS = "ABCDEFGHIJKLMNOPQRS".split("");
const TABLE = {
  6: ["Voltage", "Current"],
  7: ["1.78E-08", "1.60E-11"],
  8: ["1.00E-05", "1.00E-08"],
  9: ["5.00E-03", "6.08E-06"],
  10: ["2.20E-01", "3.70E-03"],
  11: ["6.38E-01", "1.80E+00"],
  12: ["1.00E+00", "3.40E+01"],
  13: ["1.50E+00", "8.40E+01"],
  14: ["2.04E+00", "1.38E+02"],
  15: ["2.50E+00", "1.94E+02"],
  16: ["3.07E+00", "2.51E+02"],
};
const ROWS = Array.from({ length: 21 }, (_, i) => i + 1);

const SheetRow = ({ n }) => {
  const values = TABLE[n];
  return (
    <Row>
      <RowHead $on={n === 3}>{n <= 20 ? n : ""}</RowHead>
      {COLS.map(c => {
        const i = c === "E" ? 0 : c === "F" ? 1 : -1;
        return (
          <Cell key={c} $num={n > 6}>
            {values && i >= 0 ? values[i] : ""}
          </Cell>
        );
      })}
      <Cell $w={16} />
    </Row>
  );
};

const Big = ({ w, icon, lines }) => (
  <BigButton $w={w}>
    <IconBox>{icon}</IconBox>
    <TextLine>{lines[0]}</TextLine>
    <TextLine>
      {lines[1]}
      <Chev />
    </TextLine>
  </BigButton>
);

export default function App() {
  return (
    <Page>
      <GlobalStyle />
      <TitleBar>
        <QuickBar>
          <SaveIcon />
          <Tool $w={30} $ml={12} $gap={4}>
            <UndoIcon color="#f0f0f0" />
            <Chev />
          </Tool>
          <Tool $w={30} $ml={10} $gap={7}>
            <UndoIcon color="#5e5e5e" flip />
            <Chev color="#5e5e5e" />
          </Tool>
          <Tool $w={10} $ml={11}>
            <CustomizeIcon />
          </Tool>
        </QuickBar>
        <Title>New Microsoft Excel Worksheet  -  Excel</Title>
        <Search>
          <SearchIcon />
          Search (Alt+Q)
        </Search>
        <SignIn>Sign in</SignIn>
        <WinButton $ml={9}><DisplayIcon /></WinButton>
        <WinButton><MinIcon /></WinButton>
        <WinButton><RestoreIcon /></WinButton>
        <WinButton><CloseIcon /></WinButton>
      </TitleBar>

      <MenuBar>
        {MENU.map(([name, w]) => (
          <MenuTab key={name} $w={w}>
            <MenuLabel $on={name === "Home"}>{name}</MenuLabel>
          </MenuTab>
        ))}
        <ShareButton>
          <ShareIcon />
          Share
        </ShareButton>
      </MenuBar>

      <Ribbon>
        <Group $w={96}>
          <GroupBody>
            <PasteColumn>
              <PasteIcon />
              <PasteLabel>Paste</PasteLabel>
              <TextLine><Chev /></TextLine>
            </PasteColumn>
            <SmallColumn $w={40} $gap={4} $mt={-3}>
              <Tool $w={18} $ml={1} $h={20}><ScissorsIcon /></Tool>
              <Tool $w={32} $gap={7} $h={20}><CopyIcon /><Chev /></Tool>
              <Tool $w={18} $ml={1} $h={20}><PainterIcon /></Tool>
            </SmallColumn>
          </GroupBody>
          <GroupFoot $launcher>
            <span>Clipboard</span>
            <Launcher />
          </GroupFoot>
        </Group>

        <Group $w={231}>
          <GroupBody $stack $pl={8}>
            <ToolRow>
              <Combo $w={123}>Calibri<Chev /></Combo>
              <Combo $w={43} $ml={2}>11<Chev /></Combo>
              <Tool $w={26}><GrowIcon up /></Tool>
              <Tool $w={26}><GrowIcon /></Tool>
            </ToolRow>
            <ToolRow>
              <Tool $w={22}><Letter $bold $size={14}>B</Letter></Tool>
              <Tool $w={24}><Letter $italic $serif $size={14}>I</Letter></Tool>
              <Tool $w={42} $gap={11}><Letter $under>U</Letter><Chev /></Tool>
              <ToolSep $ml={1} />
              <Tool $w={38} $ml={2} $gap={7}><BorderIcon /><Chev /></Tool>
              <ToolSep $ml={7} />
              <Tool $w={36} $gap={5}><FillIcon /><Chev /></Tool>
              <Tool $w={36} $ml={4} $gap={5}><FontColorIcon /><Chev /></Tool>
            </ToolRow>
          </GroupBody>
          <GroupFoot $launcher>
            <span>Font</span>
            <Launcher />
          </GroupFoot>
        </Group>

        <Group $w={280}>
          <GroupBody $stack $pl={9}>
            <ToolRow>
              <Tool><Lines rows={[[4, 18, 3], [6, 16, 7], [4, 18, 11]]} /></Tool>
              <Tool $ml={2}><Lines rows={[[4, 18, 6], [6, 16, 10], [4, 18, 14]]} /></Tool>
              <Tool $ml={2} $on><Lines rows={[[3, 17, 9], [5, 15, 13], [3, 17, 17]]} /></Tool>
              <ToolSep $ml={4} />
              <Tool $w={34} $ml={4} $gap={5}><OrientIcon /><Chev /></Tool>
              <ToolSep $ml={16} />
              <Tool $w={76} $ml={9} $gap={1} $start><WrapIcon />Wrap Text</Tool>
            </ToolRow>
            <ToolRow>
              <Tool><Lines rows={[[4, 18, 5], [4, 14, 9], [4, 18, 13], [4, 14, 17]]} /></Tool>
              <Tool $ml={2}><Lines rows={[[4, 18, 5], [6, 16, 9], [4, 18, 13], [6, 16, 17]]} /></Tool>
              <Tool $ml={2}><Lines rows={[[4, 18, 5], [8, 18, 9], [4, 18, 13], [8, 18, 17]]} /></Tool>
              <ToolSep $ml={4} />
              <Tool $ml={4}><IndentIcon out /></Tool>
              <Tool $ml={1}><IndentIcon /></Tool>
              <ToolSep $ml={5} />
              <Tool $w={124} $ml={7} $gap={4} $start>
                <MergeIcon />
                Merge &amp; Center
                <MergeChev><Chev /></MergeChev>
              </Tool>
            </ToolRow>
          </GroupBody>
          <GroupFoot $launcher>
            <span>Alignment</span>
            <Launcher />
          </GroupFoot>
        </Group>

        <Group $w={156}>
          <GroupBody $stack $pl={9}>
            <ToolRow>
              <Combo $w={140}>General<Chev /></Combo>
            </ToolRow>
            <ToolRow>
              <Tool $w={36} $gap={6}><AccountingIcon /><Chev /></Tool>
              <Tool $w={18} $ml={4}><Letter $size={19} $color="#c8c8c8">%</Letter></Tool>
              <Tool $w={26} $ml={3}><CommaIcon /></Tool>
              <ToolSep $ml={2} />
              <Tool $w={22} $ml={6}><DecimalIcon less /></Tool>
              <Tool $w={22}><DecimalIcon /></Tool>
            </ToolRow>
          </GroupBody>
          <GroupFoot $launcher>
            <span>Number</span>
            <Launcher />
          </GroupFoot>
        </Group>

        <Group $w={194}>
          <GroupBody $pl={9}>
            <Big w={74} icon={<ConditionalIcon />} lines={["Conditional", "Formatting"]} />
            <Big w={58} icon={<FormatTableIcon />} lines={["Format as", "Table"]} />
            <Big w={46} icon={<CellStylesIcon />} lines={["Cell", "Styles"]} />
          </GroupBody>
          <GroupFoot><span>Styles</span></GroupFoot>
        </Group>

        <Group $w={143}>
          <GroupBody $pl={9}>
            <Big w={42} icon={<InsertCellIcon />} lines={["Insert", ""]} />
            <Big w={42} icon={<DeleteCellIcon />} lines={["Delete", ""]} />
            <Big w={42} icon={<FormatCellIcon />} lines={["Format", ""]} />
          </GroupBody>
          <GroupFoot><span>Cells</span></GroupFoot>
        </Group>

        <Group $w={143}>
          <GroupBody $pl={9}>
            <SmallColumn $w={37} $gap={2} $mt={-3}>
              <Tool $w={36} $gap={6} $h={20}><SumIcon /><Chev /></Tool>
              <Tool $w={36} $gap={4} $h={20}><FillDownIcon /><Chev /></Tool>
              <Tool $w={36} $gap={4} $h={22}><EraserIcon /><Chev /></Tool>
            </SmallColumn>
            <Big w={44} icon={<SortIcon />} lines={["Sort &", "Filter"]} />
            <Big w={44} icon={<FindIcon />} lines={["Find &", "Select"]} />
          </GroupBody>
          <GroupFoot><span>Editing</span></GroupFoot>
        </Group>

        <Collapse>
          <Icon w={11} h={6} color="#ddd" sw={1.1}>
            <path d="M.5 5.5 5.5.5l5 5" />
          </Icon>
        </Collapse>
      </Ribbon>

      <FormulaBar>
        <NameBox>Q3<CaretDown /></NameBox>
        <Dots><VDots /></Dots>
        <FxGroup>
          <Icon w={10} h={10} color="#6a6a6a" sw={1.6}><path d="M0 0l10 10M10 0 0 10" /></Icon>
          <Icon w={13} h={10} color="#6a6a6a" sw={1.8}><path d="M0 5l4 4 9-9" /></Icon>
          <Letter $serif $italic $bold $size={13} $color="#e4e4e4">fx</Letter>
        </FxGroup>
        <FormulaInput><Chev /></FormulaInput>
      </FormulaBar>

      <SheetArea>
        <GridWrap>
          <Row>
            <Corner>
              <Icon w={12} h={12} color="none"><path d="M12 0v12H0z" fill="#6a6a6a" /></Icon>
            </Corner>
            {COLS.map(c => (
              <ColHead key={c} $on={c === "Q"}>{c}</ColHead>
            ))}
            <ColHead $w={16} />
          </Row>
          {ROWS.map(n => (
            <SheetRow key={n} n={n} />
          ))}
          <ChartFrame><Chart /></ChartFrame>
          <Selection />
        </GridWrap>
        <VScroll>
          <ScrollButton><MiniArrow dir="up" /></ScrollButton>
          <VThumb />
          <VTrack />
          <ScrollButton><MiniArrow dir="down" /></ScrollButton>
        </VScroll>
      </SheetArea>

      <TabBar>
        <TabNav>
          <MiniArrow dir="left" color="#a0a0a0" />
          <MiniArrow dir="right" color="#a0a0a0" />
        </TabNav>
        <SheetTab>Sheet1</SheetTab>
        <AddSheet><PlusCircle /></AddSheet>
        <TabDots><VDots /></TabDots>
        <HScroll>
          <ScrollButton><MiniArrow dir="left" /></ScrollButton>
          <HThumb />
          <HTrack />
          <ScrollButton><MiniArrow dir="right" /></ScrollButton>
        </HScroll>
      </TabBar>

      <StatusBar>
        Ready
        <ViewBtn $on $ml={938}><NormalViewIcon /></ViewBtn>
        <ViewBtn><LayoutViewIcon /></ViewBtn>
        <ViewBtn><BreakViewIcon /></ViewBtn>
        <ZoomBar>
          <Icon w={7} h={1} color="#eee"><path d="M0 .5h7" /></Icon>
          <Slider><SliderKnob /></Slider>
          <Icon w={9} h={9} color="#eee"><path d="M0 4.5h9M4.5 0v9" /></Icon>
        </ZoomBar>
        <ZoomText>100%</ZoomText>
      </StatusBar>

      <Taskbar>
        <StartBtn><WinLogo /></StartBtn>
        <TaskItem><FolderIcon /></TaskItem>
        <TaskItem><ChromeIcon /></TaskItem>
        <TaskItem $on><ExcelIcon /></TaskItem>
        <TaskItem><PhotosIcon /></TaskItem>
        <Tray>
          <TrayIcon><TrayChevron /></TrayIcon>
          <TrayIcon><BatteryIcon /></TrayIcon>
          <TrayIcon><VolumeIcon /></TrayIcon>
          <TrayIcon><WifiIcon /></TrayIcon>
          <Clock>1:19 pm<br />18/06/2022</Clock>
          <Notify><NotifyIcon /></Notify>
          <ShowDesktop />
        </Tray>
      </Taskbar>
    </Page>
  );
}
